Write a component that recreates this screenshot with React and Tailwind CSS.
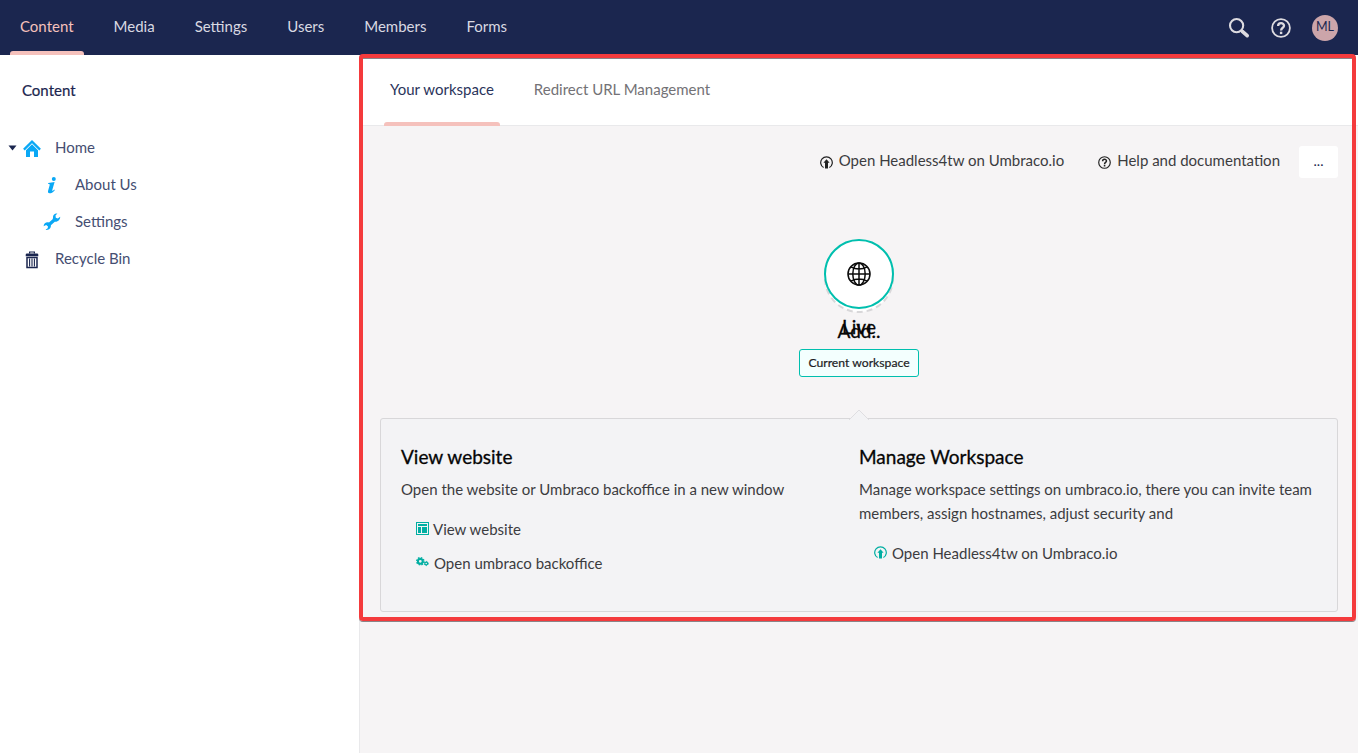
import React from "react";

const SearchIcon = () => (
  <svg width="22" height="22" viewBox="0 0 22 22" fill="none" stroke="#dddbe0" className="mt-px">
    <circle cx="8.6" cy="8.6" r="6.6" strokeWidth="2.1" />
    <path d="M13.4 13.4 L14.8 14.8" strokeWidth="2.4" />
    <path d="M14.3 14.3 L19.2 18.7" strokeWidth="3.6" strokeLinecap="round" />
  </svg>
);

const HelpIcon = ({ size, className = "" }) => (
  <svg width={size} height={size} viewBox="0 0 20 20" fill="none" stroke="currentColor" className={className}>
    <circle cx="10" cy="10" r="8.9" strokeWidth="1.8" />
    <path d="M7.1 8 C7.1 4.1 13.1 4.2 13 7.8 C13 9.9 10.1 9.7 10.1 12.5" strokeWidth="2.3" />
    <rect x="8.9" y="13.7" width="2.4" height="2.4" fill="currentColor" stroke="none" />
  </svg>
);

const ArrowUpCircle = ({ className = "" }) => (
  <svg width="13" height="13" viewBox="0 0 13 13" fill="none" stroke="currentColor" className={className}>
    <path d="M3.6 11.6 A5.8 5.8 0 1 1 9.4 11.6" strokeWidth="1.2" />
    <path d="M6.5 3.2 L9.6 6.7 H8 V12.6 H5 V6.7 H3.4 Z" fill="currentColor" stroke="none" />
  </svg>
);

const HomeIcon = () => (
  <svg width="18" height="18" viewBox="0 0 18 18" fill="#0aa8f5" className="mt-[2px]">
    <path d="M9 0 L17.9 8.8 L16.3 10.5 L9 3.2 L1.7 10.5 L0.1 8.8 Z" />
    <path d="M9 4.2 L15 10.2 V17 H11 V11.6 H7 V17 H3 V10.2 Z" />
  </svg>
);

const InfoIcon = () => (
  <svg width="10" height="17" viewBox="0 0 10 17" fill="#0aa8f5" className="mt-[2px]">
    <circle cx="6.8" cy="2.1" r="2" />
    <path d="M1.3 6 L7.6 5.1 L5.2 13.3 C5.1 14.2 5.9 13.9 7.4 12.5 L7.8 13.2 C5.8 15.5 4.1 16.3 2.6 16.3 C1.1 16.3 .7 15.2 1.1 13.8 L2.7 8.1 C2.9 7.1 2.5 7 1.1 7 Z" />
  </svg>
);

const WrenchIcon = () => (
  <svg width="18" height="18" viewBox="0 0 18 18" fill="#0aa8f5" className="mt-px">
    <path d="M14.4 .6 C11.8 .2 9.6 2 10 5 L9.6 6.2 L6 9.5 C3.2 8.7 .8 10.5 .6 13.2 L3.2 12.1 L5 13.4 L4.7 15.3 L2.6 16.8 C5.5 17.6 8.2 15.4 7.9 12.3 L11.8 8.7 C14.5 9.2 17.3 7 17.2 3.8 L14.8 5.5 L12.8 4.8 L12.5 2.4 Z" />
  </svg>
);

const TrashIcon = () => (
  <svg width="14" height="18" viewBox="0 0 14 18" fill="none" stroke="#1b264f" className="mt-[2px]">
    <path d="M4.6 2.5 V1 H9.4 V2.5" strokeWidth="1.2" />
    <path d="M.7 5.2 V3.8 Q.7 2.6 2 2.6 H12 Q13.3 2.6 13.3 3.8 V5.2 Z" fill="#1b264f" stroke="none" />
    <path d="M2 6.6 H12 V16.5 H2 Z" strokeWidth="1.5" />
    <path d="M4.6 7.5 V15.5 M7 7.5 V15.5 M9.4 7.5 V15.5" strokeWidth="1.1" />
  </svg>
);

const GlobeIcon = () => (
  <svg width="24" height="24" viewBox="0 0 24 24" fill="none" stroke="#0b0b0b" strokeWidth="1.5">
    <circle cx="12" cy="12" r="11" />
    <ellipse cx="12" cy="12" rx="6.2" ry="11" />
    <path d="M12 .9 V23.1 M.9 12 H23.1 M3.7 4.8 Q12 9 20.3 4.8 M3.7 19.2 Q12 15 20.3 19.2" />
  </svg>
);

const LayoutIcon = () => (
  <svg width="13" height="13" viewBox="0 0 13 13" fill="#00aea2">
    <path fillRule="evenodd" d="M0 0 H13 V13 H0 Z M1 1 V12 H12 V1 Z" />
    <path d="M2 2 H11 V4 H2 Z M2 5 H5 V11 H2 Z M6 5 H11 V11 H6 Z" />
  </svg>
);

const CogsIcon = () => (
  <svg width="13" height="10" viewBox="0 0 13 10" fill="none" stroke="#00aea2">
    <circle cx="4.3" cy="4.3" r="2.4" strokeWidth="2" />
    <circle cx="4.3" cy="4.3" r="3.6" strokeWidth="1.4" strokeDasharray="1.6 1.227" />
    <circle cx="10.2" cy="6.5" r="1.4" strokeWidth="1.2" />
    <circle cx="10.2" cy="6.5" r="2.1" strokeWidth=".9" strokeDasharray="1.2 1" />
  </svg>
);

const NAV = ["Content", "Media", "Settings", "Users", "Members", "Forms"];

const TopBar = () => (
  <header className="flex h-[55px] shrink-0 items-start bg-[#1b264f] text-[#d9d9e2]">
    <nav className="flex">
      {NAV.map((label, i) => (
        <div key={label} className={i === 0 ? "flex h-[55px] flex-col px-[10px] text-[#f5c1bc]" : "flex h-[55px] flex-col px-[10px]"}>
          <span className="h-[51px] px-[10px] leading-[52px]">{label}</span>
          {i === 0 && <span className="h-1 rounded-t-[3px] bg-[#f5c1bc]" />}
        </div>
      ))}
    </nav>
    <div className="ml-auto flex h-[55px] items-center gap-[21px] pr-5">
      <SearchIcon />
      <HelpIcon size={20} className="mt-px text-[#dddbe0]" />
      <span className="flex size-[26px] items-center justify-center rounded-full bg-[#cca5aa] text-[12.5px] text-[#1b264f]">ML</span>
    </div>
  </header>
);

const Sidebar = () => (
  <aside className="w-[360px] shrink-0 border-r border-[#e9e9eb] bg-white text-[#454e72]">
    <h5 className="mt-[24px] pl-[22px] text-[15px] leading-[22px] text-[#1b264f] [-webkit-text-stroke:0.2px_#1b264f]">Content</h5>
    <ul className="mt-[28px]">
      <li className="flex h-[37px] items-center pl-2">
        <svg width="9" height="6" viewBox="0 0 9 6" className="mr-[6px]"><path d="M.5 .5 H8.5 L4.5 5.5 Z" fill="#1b264f" /></svg>
        <HomeIcon />
        <span className="ml-[14px]">Home</span>
      </li>
      <li className="flex h-[37px] items-center pl-[47px]">
        <InfoIcon />
        <span className="ml-[18px]">About Us</span>
      </li>
      <li className="flex h-[37px] items-center pl-[43px]">
        <WrenchIcon />
        <span className="ml-[14px]">Settings</span>
      </li>
      <li className="flex h-[37px] items-center pl-[25px]">
        <TrashIcon />
        <span className="ml-4">Recycle Bin</span>
      </li>
    </ul>
  </aside>
);

const Tabs = () => (
  <div className="flex h-[71px] border-b border-[#e9e9eb] bg-white pl-6">
    <div className="-mb-px flex flex-col text-[#2a345b]">
      <span className="h-[67px] px-[6px] leading-[68px]">Your workspace</span>
      <span className="h-1 rounded-t-[3px] bg-[#f5c1bc]" />
    </div>
    <span className="pl-[34px] leading-[68px] text-[#737276]">Redirect URL Management</span>
  </div>
);

const Actions = () => (
  <div className="flex h-8 items-center justify-end pr-5 text-[#3c3c3f]">
    <ArrowUpCircle className="mt-px mr-[6px] text-[#222]" />
    <span className="-mt-[4px]">Open Headless4tw on Umbraco.io</span>
    <HelpIcon size={13} className="mt-px mr-[6px] ml-[34px] text-[#222]" />
    <span className="-mt-[4px]">Help and documentation</span>
    <button className="ml-[19px] h-8 w-[39px] rounded-[3px] bg-white pb-[3px] text-[14px] text-[#1b264f]">...</button>
  </div>
);

const WorkspaceNode = () => (
  <div className="mt-[61px] flex flex-col items-center">
    <div className="relative flex size-[70px] items-center justify-center">
      <svg className="absolute top-[4px] left-0" width="70" height="70" viewBox="0 0 70 70">
        <circle cx="35" cy="35" r="34" fill="#fff" stroke="#d8d7d9" strokeWidth="2" strokeDasharray="6 4" strokeDashoffset="0.4" />
      </svg>
      <div className="relative flex size-[70px] items-center justify-center rounded-full border-2 border-[#00bfae] bg-white">
        <GlobeIcon />
      </div>
    </div>
    <div className="relative mt-[5px] h-[26px] text-center text-[19px] leading-[26px] text-[#060606] [-webkit-text-stroke:0.3px_#060606]">
      Live
      <span className="absolute top-[4px] left-1/2 -translate-x-1/2">Add..</span>
    </div>
    <div className="mt-[9px] flex h-7 w-[120px] items-center justify-center rounded-[3px] border border-[#00bfae] bg-[#f3fffe] text-[12.2px] text-[#1c1c1e] [-webkit-text-stroke:0.2px_#1c1c1e]">
      Current workspace
    </div>
  </div>
);

const Details = () => (
  <section className="relative mx-5 mt-[41px] flex h-[194px] rounded-[3px] border border-[#d8d7d9] bg-[#f3f3f5] px-5 pt-[25px] text-[#3c3c3f]">
    <svg className="absolute -top-[10px] left-[467px]" width="22" height="12" viewBox="0 0 22 12">
      <path d="M1 11 L11 1 L21 11" fill="#f3f3f5" stroke="#dfdee1" />
    </svg>
    <div className="w-[458px]">
      <h3 className="text-[19px] leading-[26px] text-[#060606] [-webkit-text-stroke:0.3px_#060606]">View website</h3>
      <p className="mt-[7px] leading-6">Open the website or Umbraco backoffice in a new window</p>
      <div className="mt-4 ml-[15px] flex h-6 items-center"><span className="mr-[4px] -mt-[2px]"><LayoutIcon /></span>View website</div>
      <div className="mt-[10px] ml-[15px] flex h-6 items-center"><span className="mr-[5px] -mt-[2px]"><CogsIcon /></span>Open umbraco backoffice</div>
    </div>
    <div className="w-[458px]">
      <h3 className="text-[19px] leading-[26px] text-[#060606] [-webkit-text-stroke:0.3px_#060606]">Manage Workspace</h3>
      <p className="mt-[7px] leading-6">Manage workspace settings on umbraco.io, there you can invite team members, assign hostnames, adjust security and</p>
      <div className="mt-4 ml-[15px] flex h-6 items-center"><ArrowUpCircle className="mr-[5px] -mt-[2px] text-[#00aea2]" />Open Headless4tw on Umbraco.io</div>
    </div>
  </section>
);

export default function App() {
  return (
    <div className="relative flex h-[753px] w-[1358px] flex-col overflow-hidden bg-[#f6f4f5] font-[Lato,sans-serif] text-[15px]">
      <TopBar />
      <div className="flex flex-1">
        <Sidebar />
        <main className="min-w-0 flex-1">
          <Tabs />
          <div className="pt-5">
            <Actions />
            <WorkspaceNode />
            <Details />
          </div>
        </main>
      </div>
      <div className="pointer-events-none absolute top-[54px] left-[359px] h-[567px] w-[997px] rounded-[4px] border-4 border-[#f43a3c] shadow-[0_1px_0_#8b8487,inset_0_1px_0_#8b8487]" />
    </div>
  );
}
